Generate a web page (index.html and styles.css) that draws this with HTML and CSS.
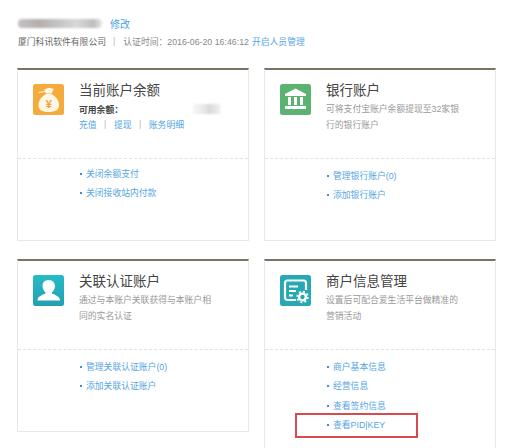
FILE: index.html
```html
<!DOCTYPE html>
<html lang="zh-CN">

<head>
  <meta charset="UTF-8">
  <meta name="viewport" content="width=device-width, initial-scale=1.0">
  <title>账户管理</title>
  <link rel="stylesheet" href="styles.css">
</head>

<body>

  <div class="wrap">
    <div class="top">
      <div class="top-name">
        <span class="mask-name"></span>
        <a class="edit">修改</a>
      </div>
      <div class="top-info">
        <span class="company">厦门科讯软件有限公司</span>
        <span class="sep">|</span>
        <span>认证时间：2016-06-20 16:46:12</span>
        <a>开启人员管理</a>
      </div>
    </div>

    <div class="cards">
      <div class="card">
        <div class="card-head">
          <svg class="icon" viewBox="0 0 31 31">
            <rect width="31" height="31" rx="2.5" fill="#f5ab3c" />
            <path d="M11 5 C13 6 14 3.8 16 3.8 C18 3.8 19.5 5.5 21 4.5 L18.5 9.5 H13 Z" fill="#fff6e6" />
            <path d="M5.5 8.5 L12 7.5" stroke="#fff6e6" stroke-width="1" fill="none" />
            <path d="M13 10 H18.5 C23 12.5 26 16.5 26 21 C26 26 22 28 15.5 28 C9 28 5.5 26 5.5 21 C5.5 16.5 8.5 12.5 13 10 Z" fill="#fff6e6" />
            <text x="15.7" y="23.5" class="yen">¥</text>
          </svg>
          <div class="head-text">
            <h3>当前账户余额</h3>
            <div class="balance">
              <b>可用余额：</b>
              <span class="mask-balance"></span>
            </div>
            <div class="actions">
              <a>充值</a><span class="sep">|</span><a>提现</a><span class="sep">|</span><a>账务明细</a>
            </div>
          </div>
        </div>
        <ul class="links links-first">
          <li><a>关闭余额支付</a></li>
          <li><a>关闭接收站内付款</a></li>
        </ul>
      </div>

      <div class="card">
        <div class="card-head">
          <svg class="icon" viewBox="0 0 31 31">
            <rect width="31" height="31" rx="2.5" fill="#5cb270" />
            <path d="M15.5 4.5 L26 10 V12 H5 V10 Z" fill="#fff" />
            <path d="M8 13 H11 V21 H8 Z M14 13 H17 V21 H14 Z M20 13 H23 V21 H20 Z" fill="#fff" />
            <path d="M5 22 H26 V25 H5 Z" fill="#fff" />
          </svg>
          <div class="head-text">
            <h3>银行账户</h3>
            <p>可将支付宝账户余额提现至32家银行的银行账户</p>
          </div>
        </div>
        <ul class="links">
          <li><a>管理银行账户(0)</a></li>
          <li><a>添加银行账户</a></li>
        </ul>
      </div>

      <div class="card">
        <div class="card-head">
          <svg class="icon" viewBox="0 0 31 31">
            <defs>
              <linearGradient id="tealFill" x1="0" y1="0" x2="0" y2="1">
                <stop offset="0" stop-color="#25bcc6" />
                <stop offset="1" stop-color="#249fb0" />
              </linearGradient>
            </defs>
            <rect width="31" height="31" rx="2.5" fill="url(#tealFill)" />
            <path d="M15.5 5 C19.5 5 22 7.8 22 11 C22 14 20.5 16 19 17.2 V18.5 C22 20 27 21 27 25.5 H4.5 C4.5 21 9.5 20 12.5 18.5 V17.2 C11 16 9.5 14 9.5 11 C9.5 7.8 11.5 5 15.5 5 Z" fill="#fff" />
          </svg>
          <div class="head-text">
            <h3>关联认证账户</h3>
            <p>通过与本账户关联获得与本账户相同的实名认证</p>
          </div>
        </div>
        <ul class="links">
          <li><a>管理关联认证账户(0)</a></li>
          <li><a>添加关联认证账户</a></li>
        </ul>
      </div>

      <div class="card card-tall">
        <div class="card-head">
          <svg class="icon" viewBox="0 0 31 31">
            <rect width="31" height="31" rx="2.5" fill="#27a9b4" />
            <path d="M16 25 H7.5 C6 25 5 24 5 22.5 V8 C5 6.5 6 5.5 7.5 5.5 H23.5 C25 5.5 26 6.5 26 8 V15" fill="none" stroke="#fff" stroke-width="2.2" />
            <path d="M9 11.5 H18 M9 16 H16 M9 20.5 H13" stroke="#fff" stroke-width="1.8" />
            <circle cx="22.5" cy="22" r="3.4" fill="none" stroke="#fff" stroke-width="2.4" />
            <circle cx="22.5" cy="22" r="5.4" fill="none" stroke="#fff" stroke-width="1.6" stroke-dasharray="2.1 2.1" />
          </svg>
          <div class="head-text">
            <h3>商户信息管理</h3>
            <p>设置后可配合爱生活平台做精准的营销活动</p>
          </div>
        </div>
        <ul class="links">
          <li><a>商户基本信息</a></li>
          <li><a>经营信息</a></li>
          <li><a>查看签约信息</a></li>
          <li class="marked"><a>查看PID|KEY</a></li>
        </ul>
      </div>
    </div>
  </div>

</body>

</html>
```

FILE: styles.css
```css
html,
body {
  margin: 0;
  height: 448px;
  overflow: hidden;
  background-color: #fff;
}

body {
  font-family: "Liberation Sans", "Noto Sans CJK SC", sans-serif;
  font-size: 8.8px;
  color: #888;
}

a {
  color: #56a5e4;
}

.wrap {
  padding: 15px 11px 0 17px;
}

.top {
  height: 53px;
}

.top-name {
  display: flex;
  align-items: center;
  height: 16px;
}

.mask-name {
  width: 84px;
  height: 9px;
  margin-left: 1px;
  border-radius: 4px;
  background: linear-gradient(90deg, #c4c4c4, #b5aeaa 25%, #c6c6c6 50%, #d8d8d8 70%, #bdbdbd 90%, #e8e8e8);
  filter: blur(1px);
}

.edit {
  margin-left: 8px;
  font-size: 10px;
  color: #4a9fe0;
}

.top-info {
  display: flex;
  align-items: center;
  gap: 3px;
  height: 14px;
  margin-top: 3px;
  padding-left: 1px;
  white-space: nowrap;
}

.company {
  color: #666;
}

.top-info .sep {
  margin: 0 5px 0 4px;
  color: #bbb;
}

.cards {
  display: grid;
  grid-template-columns: 232px 232px;
  align-items: start;
  column-gap: 15px;
  row-gap: 18px;
}

.card {
  box-sizing: border-box;
  height: 173px;
  border: 1px solid #e8e8e8;
  border-top: 2px solid #7d7364;
}

.card-tall {
  height: 200px;
}

.card-head {
  display: flex;
  height: 89px;
  border-bottom: 1px dashed #e2e2e2;
  box-sizing: border-box;
  padding: 14px 20px 0 15px;
}

.icon {
  flex: none;
  width: 31px;
  height: 31px;
}

.yen {
  font-size: 11px;
  font-weight: 700;
  text-anchor: middle;
  fill: #f0a235;
}

.head-text {
  margin-left: 15px;
}

h3 {
  margin: -3px 0 0;
  font-size: 13.5px;
  line-height: 20px;
  font-weight: 400;
  color: #444;
}

.head-text p {
  margin: 0;
  width: 136px;
  line-height: 16px;
  color: #999;
}

.balance {
  display: flex;
  align-items: center;
  height: 16px;
  color: #444;
}

.balance b {
  font-weight: 700;
}

.mask-balance {
  width: 27px;
  height: 10px;
  margin-left: 70px;
  background: linear-gradient(90deg, #f6f6f6, #e8e8e8 40%, #d8d8d8 60%, #f0f0f0);
  filter: blur(1px);
}

.actions {
  display: flex;
  align-items: center;
  height: 14px;
}

.actions .sep {
  margin: 0 7.5px;
  color: #bbb;
}

.links {
  margin: 0;
  padding: 8px 0 0 62px;
  list-style: none;
}

.links-first {
  padding-top: 6px;
}

.links li {
  position: relative;
  height: 19.4px;
  line-height: 19px;
  padding-left: 6px;
}

.links li::before {
  content: "";
  position: absolute;
  left: 0;
  top: 8px;
  width: 2px;
  height: 2px;
  background-color: #3f8fcb;
}

.links .marked::after {
  content: "";
  position: absolute;
  left: -32px;
  top: -3px;
  width: 119px;
  height: 21px;
  border: 2px solid #d94a4f;
}
```
